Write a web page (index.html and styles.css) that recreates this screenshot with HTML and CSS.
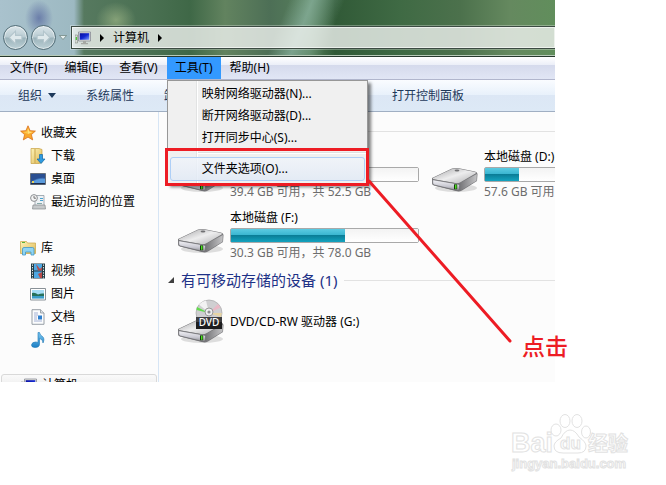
FILE: index.html
```html
<!DOCTYPE html>
<html lang="zh-CN">
<head>
    <meta charset="UTF-8">
    <meta name="viewport" content="width=device-width, initial-scale=1.0">
    <title>计算机</title>
    <link rel="stylesheet" href="styles.css">
</head>
<body>
    <!-- Shared icons -->
    <svg class="defs" aria-hidden="true">
        <defs>
            <linearGradient id="metal-top" x1="0" y1="0" x2="1" y2="1">
                <stop offset="0" stop-color="#a4a4a6"/>
                <stop offset=".5" stop-color="#ededee"/>
                <stop offset="1" stop-color="#b0b0b2"/>
            </linearGradient>
            <linearGradient id="metal-front" x1="0" y1="0" x2="0" y2="1">
                <stop offset="0" stop-color="#f4f4f8"/>
                <stop offset=".6" stop-color="#c9c9d2"/>
                <stop offset="1" stop-color="#8d8d92"/>
            </linearGradient>
            <linearGradient id="metal-side" x1="0" y1="0" x2="1" y2="0">
                <stop offset="0" stop-color="#77777a"/>
                <stop offset="1" stop-color="#c4c4c6"/>
            </linearGradient>
            <linearGradient id="screen" x1="0" y1="0" x2="1" y2="1">
                <stop offset="0" stop-color="#0a0f9a"/>
                <stop offset=".5" stop-color="#1226d0"/>
                <stop offset="1" stop-color="#7fa0ff"/>
            </linearGradient>
            <linearGradient id="folder" x1="0" y1="0" x2="1" y2="1">
                <stop offset="0" stop-color="#fdf3b8"/>
                <stop offset="1" stop-color="#dfb955"/>
            </linearGradient>
            <linearGradient id="blue" x1="0" y1="0" x2="0" y2="1">
                <stop offset="0" stop-color="#7cc8f2"/>
                <stop offset="1" stop-color="#1c7fc4"/>
            </linearGradient>
            <symbol id="drive" viewBox="0 0 48 26">
                <ellipse cx="25" cy="21" rx="21" ry="4" fill="#000" opacity=".12"/>
                <path d="M1 11 L21 1.500 Q24 .5 28 1.200 L44 4.500 Q46.500 5 46.500 7 L46 14 L31 23.500 Q28 25 25 24 L3 18.500 Q1 18 1 16Z" fill="#77777a"/>
                <path d="M2 11 L21 2 Q24 1 28 1.800 L44 5 Q46 5.600 44.500 6.600 L29 15.500 Q27 16.500 24 16 L3 12.300 Q1 12 2 11Z" fill="url(#metal-top)"/>
                <path d="M29 16 L45.800 7 L45.500 13.700 L29.500 23.500Z" fill="url(#metal-side)"/>
                <path d="M1.700 12.700 L25 16.700 Q28.500 17 28.500 18.500 L28.300 22 Q28 24 25 23.300 L3.500 18 Q1.700 17.500 1.700 16Z" fill="url(#metal-front)" stroke="#66666a" stroke-width=".6"/>
                <path d="M23 17.300h3.200v5h-3.200z" fill="#18380e"/>
                <path d="M24 17.800h1.500v4h-1.500z" fill="#49e01e"/>
                <ellipse cx="26" cy="3.500" rx="2.400" ry=".9" fill="#707073"/>
            </symbol>
            <symbol id="monitor" viewBox="0 0 16 16">
                <path d="M0 5h2.500v8H0z" fill="#d9dcd8" stroke="#72786f" stroke-width=".5"/>
                <path d="M.7 7h1.200v3H.7z" fill="#3fc52b"/>
                <path d="M3.500 2h12v9h-12z" fill="#e6e6df" stroke="#7c7f8c" stroke-width=".7"/>
                <path d="M4.700 3.200h9.600v6.600H4.700z" fill="url(#screen)"/>
                <path d="M8 11h3v2h2v1.300H6V13h2z" fill="#a6a8a3"/>
            </symbol>
        </defs>
    </svg>

    <main class="window">
        <header class="titlebar">
            <button class="nav-btn" aria-label="后退">
                <svg viewBox="0 0 16 16"><path d="M8 2 2 8l6 6v-4h6V6H8z"/></svg>
            </button>
            <button class="nav-btn" aria-label="前进">
                <svg viewBox="0 0 16 16"><path d="M8 2l6 6-6 6v-4H2V6h6z"/></svg>
            </button>
            <button class="history" aria-label="最近的页面">
                <svg viewBox="0 0 8 5"><path d="M.5.5h7L4 4.500z"/></svg>
            </button>
            <nav class="address">
                <svg class="icon"><use href="#monitor"/></svg>
                <span class="crumb-arrow"></span>
                <a href="#">计算机</a>
                <span class="crumb-arrow"></span>
            </nav>
        </header>

        <nav class="menubar">
            <button>文件(F)</button>
            <button>编辑(E)</button>
            <button>查看(V)</button>
            <div class="menu">
                <button class="open">工具(T)</button>
                <div class="popup">
                    <button>映射网络驱动器(N)...</button>
                    <button>断开网络驱动器(D)...</button>
                    <button>打开同步中心(S)...</button>
                    <hr>
                    <button class="hover">文件夹选项(O)...</button>
                </div>
            </div>
            <button>帮助(H)</button>
        </nav>

        <div class="toolbar">
            <button class="dropdown">组织</button>
            <button>系统属性</button>
            <button>卸载</button>
            <button class="control-panel">打开控制面板</button>
        </div>

        <div class="content">
            <aside class="sidebar">
                <ul>
                    <li class="root">
                        <svg class="icon" viewBox="0 0 16 16"><path d="M8 .8l2.100 4.900 5.300.4-4 3.500 1.300 5.300L8 12.100l-4.700 2.800 1.300-5.300-4-3.500 5.300-.4z" fill="#f9a72b" stroke="#d9701c" stroke-width=".8"/><path d="M8 3l1.300 3.500 3.600.4L8 9z" fill="#ffe07a"/><path d="M8 3v6L3 6.900l3.700-.4z" fill="#fdc850"/></svg>
                        <a href="#">收藏夹</a>
                    </li>
                    <li>
                        <svg class="icon" viewBox="0 0 16 16"><path d="M1 .5h8l3 1v13l-3 1H1z" fill="url(#folder)" stroke="#c59f41" stroke-width=".7"/><path d="M5 1v14" stroke="#c9a64c"/><path d="M9.500 6.500h3v4.500H15l-4 4.500-4-4.500h2.500z" fill="#2f9be0" stroke="#1468a8" stroke-width=".7"/></svg>
                        <a href="#">下载</a>
                    </li>
                    <li>
                        <svg class="icon" viewBox="0 0 16 16"><path d="M.5 2.500h15v11H.5z" fill="#3d6fb5" stroke="#66707c"/><path d="M1 3h14v4Q8 6 1 11z" fill="#2a4f91"/><path d="M1 12q6-5 14-4v4z" fill="#5b9bdc"/><path d="M1 12h14v1.200H1z" fill="#1b2c4d"/><path d="M2 10h2v2H2z" fill="#e8d35c"/></svg>
                        <a href="#">桌面</a>
                    </li>
                    <li>
                        <svg class="icon" viewBox="0 0 16 16"><path d="M5 1.500h9v10H5z" fill="#eef2f5" stroke="#929ba3" stroke-width=".8"/><path d="M10 4.500h3M10 6.500h3" stroke="#48a2d0"/><path d="M7 9.500h5" stroke="#8aa"/><path d="M3 11h12l.5 4H2.500z" fill="#c6c9cb" stroke="#85898c" stroke-width=".7"/><circle cx="4" cy="4" r="3.400" fill="#f4f4f4" stroke="#8c8f92"/><path d="M4 2v2.200h2" stroke="#555" stroke-width=".8" fill="none"/></svg>
                        <a href="#">最近访问的位置</a>
                    </li>
                </ul>
                <ul>
                    <li class="root">
                        <svg class="icon" viewBox="0 0 16 16"><path d="M.5 1.500h6l1 1.500h8v10.500H.5z" fill="url(#folder)" stroke="#c9a545" stroke-width=".7"/><path d="M2 2.500h3" stroke="#55b53c"/><path d="M2.500 15V9q0-1.500 1.500-1.500h8.500Q14 7.500 14 9v6h-3v-3H5.500v3z" fill="#8fd4f3" stroke="#4197c7" stroke-width=".8"/></svg>
                        <a href="#">库</a>
                    </li>
                    <li>
                        <svg class="icon" viewBox="0 0 16 16"><path d="M1 .5h14v15H1z" fill="#253d46"/><path d="M4 1h8v6.500H4zM4 8.500h8V15H4z" fill="#4da8e3"/><path d="M6 1l4 5 2-2v3.500H8zM12 9l-4 2 2 4h2z" fill="#b84b48"/><path d="M2.500 1.500v14M13.500 1.500v14" stroke="#e8f0ef" stroke-dasharray="1.300 1.300"/></svg>
                        <a href="#">视频</a>
                    </li>
                    <li>
                        <svg class="icon" viewBox="0 0 16 16"><path d="M.5 2.500h15v11.500H.5z" fill="#fff" stroke="#899197"/><path d="M2 4h12v8.500H2z" fill="#a5dcf5"/><path d="M2 7q3-1 6 1.500 3-1.500 6-1V10H2z" fill="#27715b"/><path d="M2 10h12v2.500H2z" fill="#3c9dc9"/></svg>
                        <a href="#">图片</a>
                    </li>
                    <li>
                        <svg class="icon" viewBox="0 0 16 16"><path d="M2 .7h8.500L14 4v11.300H2z" fill="#fbfcfd" stroke="#8d959c" stroke-width=".9"/><path d="M10.500.7V4H14" fill="#dce2e6" stroke="#8d959c" stroke-width=".8"/><path d="M4 4h4M4 6h4M4 8h3M4 10h3M4 12h8" stroke="#8f9ec8" stroke-width=".8"/><path d="M8 6.500h4v4H8z" fill="#2e7fcd"/></svg>
                        <a href="#">文档</a>
                    </li>
                    <li>
                        <svg class="icon" viewBox="0 0 16 16"><path d="M8 .5h1.500q.5 3 3 4 2.500 2 .5 6.500 0-4-3.500-4.500V12q0 3.500-4.500 3.500-3.500 0-3.500-2.500Q2 10 5.500 10 7 10 8 10.500z" fill="url(#blue)" stroke="#1b76b4" stroke-width=".6"/></svg>
                        <a href="#">音乐</a>
                    </li>
                </ul>
                <div class="selected">
                    <svg class="icon"><use href="#monitor"/></svg>
                    <a href="#">计算机</a>
                </div>
            </aside>

            <section class="files">
                <div class="group-line"></div>
                <div class="drives">
                    <div class="drive">
                        <svg class="drive-icon"><use href="#drive"/></svg>
                        <div class="info">
                            <span class="name"></span>
                            <progress value="25" max="100" aria-label="已用空间"></progress>
                            <span class="space">39.4 GB 可用，共 52.5 GB</span>
                        </div>
                    </div>
                    <div class="drive">
                        <svg class="drive-icon"><use href="#drive"/></svg>
                        <div class="info">
                            <label class="name" for="disk-d">本地磁盘 (D:)</label>
                            <progress id="disk-d" value="18" max="100"></progress>
                            <span class="space">57.6 GB 可用</span>
                        </div>
                    </div>
                    <div class="drive">
                        <svg class="drive-icon"><use href="#drive"/></svg>
                        <div class="info">
                            <label class="name" for="disk-f">本地磁盘 (F:)</label>
                            <progress id="disk-f" value="61" max="100"></progress>
                            <span class="space">30.3 GB 可用，共 78.0 GB</span>
                        </div>
                    </div>
                </div>
                <h2>有可移动存储的设备 (1)</h2>
                <div class="drive removable">
                    <svg class="dvd-icon" viewBox="0 0 48 46">
                        <use href="#drive" y="19" width="48" height="26"/>
                        <circle cx="32" cy="14" r="13" fill="#cfcfd1" stroke="#a6a6a8" stroke-width=".7"/>
                        <path d="M32 14 22 5.500A13 13 0 0 1 29 1.500z" fill="#f2f2f3"/>
                        <path d="M32 14 20 8 19.500 11z" fill="#62dc4c"/>
                        <path d="M32 14 44 18 44.800 14z" fill="#e7d5a4"/>
                        <path d="M32 14 41 5 43.500 8.500z" fill="#e9b9c6"/>
                        <circle cx="32" cy="13" r="4" fill="#efeff0" stroke="#999"/>
                        <circle cx="32" cy="13" r="1.600" fill="#8d8d90"/>
                        <path d="M19 18h26v12H19z" fill="#1d1d1f"/>
                        <path d="M19 18h26v5H19z" fill="#3e3e41"/>
                        <text x="32" y="27" text-anchor="middle">DVD</text>
                    </svg>
                    <div class="name">DVD/CD-RW 驱动器 (G:)</div>
                </div>
            </section>
        </div>
    </main>

    <footer class="watermark">
        <svg viewBox="0 0 124 62" role="img" aria-label="Baidu 经验">
            <g class="outline">
                <text class="brand" x="2" y="42">Bai</text>
                <ellipse cx="47" cy="20" rx="5" ry="6"/>
                <ellipse cx="56" cy="11" rx="5" ry="6.500"/>
                <ellipse cx="68" cy="11" rx="5" ry="6.500"/>
                <ellipse cx="77" cy="22" rx="4.500" ry="6"/>
                <path d="M61 20q5 0 9 7 7 5 7 9 0 7-8 7H54q-9 0-9-7 0-4 7-8 4-8 9-8z"/>
                <text class="du" x="51" y="39">du</text>
                <text class="cn" x="79" y="41">经验</text>
                <text class="url" x="3" y="58">jingyan.baidu.com</text>
            </g>
        </svg>
    </footer>

    <!-- Annotation over the window -->
    <svg class="marks" aria-hidden="true">
        <path d="M166.500 149.500h201v35h-201z"/>
        <path d="M369 181 510 341" stroke-linecap="round"/>
    </svg>
    <strong class="note">点击</strong>
</body>
</html>
```

FILE: styles.css
```css
* {
    box-sizing: border-box;
}
body {
    margin: 0;
    height: 100vh;
    display: flex;
    flex-direction: column;
    position: relative;
    background: #fff;
    color: #000;
    font: 12px/16px "Noto Sans", "Noto Sans CJK SC", sans-serif;
}
button {
    padding: 0;
    border: none;
    background: none;
    color: inherit;
    font: inherit;
    white-space: nowrap;
}
a {
    color: inherit;
    text-decoration: none;
}
ul {
    margin: 0;
    padding: 0;
    list-style: none;
}
.defs {
    position: absolute;
    width: 0;
    height: 0;
}
.icon {
    width: 16px;
    height: 16px;
    flex: none;
}
.window {
    flex: 1;
    min-height: 0;
    margin-right: 111px;
    overflow: hidden;
    display: flex;
    flex-direction: column;
    background: #fcfcfc;
}

/* Title bar */
.titlebar {
    flex: none;
    display: flex;
    align-items: center;
    height: 57px;
    padding: 19px 0 0 3px;
    border-bottom: 1px solid #26382d;
    box-shadow: inset 0 -1px #b8cbb9;
    background:
        radial-gradient(ellipse 14px 18px at 39px 18px, rgba(70, 84, 150, .6), transparent),
        radial-gradient(ellipse 20px 18px at 116px 20px, rgba(185, 205, 150, .5), transparent),
        linear-gradient(112deg, transparent 268px, rgba(150, 190, 175, .6) 290px, transparent 320px),
        linear-gradient(90deg, #a9c2cd 0, #9db9c2 74px, #56795f 84px, #4a7052 150px, #3f6847 190px, #62835f 225px, #4d6f56 270px, #57805c 310px, #315a37 335px, #3f6a44 400px, #4c714c 460px, #65895f 510px, #618e5c);
}
.nav-btn {
    display: flex;
    align-items: center;
    justify-content: center;
    width: 25px;
    height: 25px;
    margin-right: 3px;
    border: 1px solid #526d77;
    border-radius: 50%;
    background: linear-gradient(#dbe6ea 0, #b9cbd2 48%, #9ab2ba 52%, #bed2d7);
    box-shadow: inset 0 0 0 1px rgba(255, 255, 255, .5);
}
.nav-btn svg {
    width: 17px;
    height: 17px;
    fill: #dfe9ec;
    stroke: #b3c5cc;
}
.history {
    display: flex;
    margin: 0 4px 0 0;
}
.history svg {
    width: 8px;
    height: 5px;
    fill: #e6eeee;
    stroke: #687f7a;
    stroke-width: .7px;
}
.address {
    flex: 1;
    display: flex;
    align-items: center;
    gap: 9px;
    height: 23px;
    padding-left: 3px;
    border: 1px solid #3c4b42;
    border-right: none;
    box-shadow: inset 0 0 0 1px rgba(255, 255, 255, .6), 0 0 0 1px rgba(255, 255, 255, .3);
    background: rgba(240, 243, 240, .8);
}
.crumb-arrow {
    border: 4px solid transparent;
    border-left-color: #000;
    border-right-width: 0;
}

/* Menu bar */
.menubar {
    flex: none;
    display: flex;
    gap: 1px;
    height: 23px;
    padding-left: 2px;
    border-bottom: 1px solid #b1b6cd;
    background: linear-gradient(#fff, #eceff8 35%, #d5daec 36%, #e1e6f5);
}
.menubar button {
    padding: 0 8px;
}
.menu {
    position: relative;
    display: flex;
}
.menubar .open {
    background: #3399ff;
}
.popup {
    position: absolute;
    top: 23px;
    left: 0;
    z-index: 1;
    display: flex;
    flex-direction: column;
    width: 201px;
    padding: 2px;
    border: 1px solid #979797;
    background: linear-gradient(90deg, transparent 28px, #e2e3e3 28px, #e2e3e3 29px, #fff 29px, #fff 30px, transparent 30px) #f0f0f0;
    box-shadow: 3px 3px 3px rgba(0, 0, 0, .5);
}
.menubar .popup button {
    height: 22px;
    padding: 0 0 0 32px;
    text-align: left;
}
.popup hr {
    width: 168px;
    margin: 3px 0 3px 28px;
    border: solid #fff;
    border-width: 0 0 1px;
    border-top: 1px solid #e0e0e0;
}
.menubar .popup .hover {
    height: 24px;
    padding-left: 31px;
    border: 1px solid #aecff7;
    border-radius: 3px;
    background: linear-gradient(rgba(240, 244, 250, .8), rgba(225, 234, 246, .8));
}

/* Toolbar */
.toolbar {
    flex: none;
    display: flex;
    height: 32px;
    padding-left: 3px;
    border-bottom: 1px solid #a0afc3;
    background: linear-gradient(#fafcff, #e8f1fb 48%, #dce7f5 50%, #dde9f6);
    color: #1e395b;
}
.toolbar button {
    padding: 0 15px;
}
.dropdown::after {
    content: "";
    display: inline-block;
    margin-left: 6px;
    border: 4px solid transparent;
    border-top: 5px solid #1e395b;
    border-bottom-width: 0;
    vertical-align: 2px;
}
.toolbar .control-panel {
    margin-left: 174px;
}

/* Navigation pane */
.content {
    flex: 1;
    min-height: 0;
    display: flex;
}
.sidebar {
    flex: none;
    width: 159px;
    padding: 9px 1px 0;
    border-right: 1px solid #d6e5f5;
}
.sidebar ul {
    margin-bottom: 23px;
}
.sidebar li {
    display: flex;
    align-items: center;
    gap: 5px;
    height: 23px;
    padding-left: 29px;
}
.sidebar .root {
    padding-left: 19px;
}
.selected {
    display: flex;
    gap: 5px;
    padding: 2px 0 2px 19px;
    border: 1px solid #d9d9d9;
    border-radius: 3px;
    background: linear-gradient(#fafafa, #e5e5e5);
}

/* Drive list */
.files {
    flex: 1;
    min-width: 0;
    padding: 19px 0 0 9px;
}
.group-line {
    height: 1px;
    background: #e2e2e2;
}
.drives {
    display: grid;
    grid-template-columns: 254px 254px;
    padding: 17px 0 0 9px;
}
.drive {
    display: flex;
    gap: 5px;
    height: 61px;
}
.drive-icon {
    flex: none;
    width: 48px;
    height: 26px;
    margin-top: 18px;
}
.info {
    display: flex;
    flex-direction: column;
}
.name {
    min-height: 16px;
    white-space: nowrap;
}
.info progress {
    appearance: none;
    width: 189px;
    height: 15px;
    margin: 2px 0;
    border: 1px solid #a9a9a9;
    border-radius: 2px;
    background: #fff;
}
progress::-webkit-progress-bar {
    background: linear-gradient(#f3f3f3, #fff);
}
progress::-webkit-progress-value {
    background: linear-gradient(#5ccbe2, #3bb6d1 45%, #0a7c96 48%, #14a3bf);
}
.space {
    color: #6d6d6d;
    white-space: nowrap;
}
h2 {
    display: flex;
    align-items: center;
    gap: 7px;
    margin: 0;
    color: #1e3287;
    font-size: 15px;
    font-weight: normal;
    line-height: 18px;
}
h2::before {
    content: "";
    border: solid transparent;
    border-width: 0 0 6px 6px;
    border-bottom-color: #404040;
}
h2::after {
    content: "";
    flex: 1;
    height: 1px;
    background: #e2e2e2;
}
.removable {
    align-items: center;
    padding: 4px 0 0 9px;
}
.dvd-icon {
    width: 48px;
    height: 46px;
}
.dvd-icon text {
    fill: #fff;
    font: 500 10px "Noto Sans", sans-serif;
}

/* Watermark */
.watermark {
    flex: none;
    display: flex;
    justify-content: flex-end;
    height: 103px;
    padding: 28px 33px 0 0;
}
.watermark svg {
    width: 124px;
    height: 62px;
}
.outline {
    fill: #fff;
    stroke: #e2e2e2;
    stroke-width: 1px;
    font-family: "Liberation Sans", "Noto Sans CJK SC", sans-serif;
    font-weight: bold;
}
.brand {
    font-size: 27px;
}
.du {
    font-size: 17px;
}
.cn {
    font-size: 20px;
}
.url {
    font-size: 13px;
}

/* Annotation */
.marks {
    position: absolute;
    inset: 0;
    z-index: 2;
    width: 100%;
    height: 100%;
    fill: none;
    stroke: #ed1c24;
    stroke-width: 3px;
    pointer-events: none;
}
.note {
    position: absolute;
    top: 332px;
    left: 522px;
    z-index: 2;
    color: #ed1c24;
    font: 500 23px/26px "KaiTi", "Noto Sans CJK SC", serif;
}
```
